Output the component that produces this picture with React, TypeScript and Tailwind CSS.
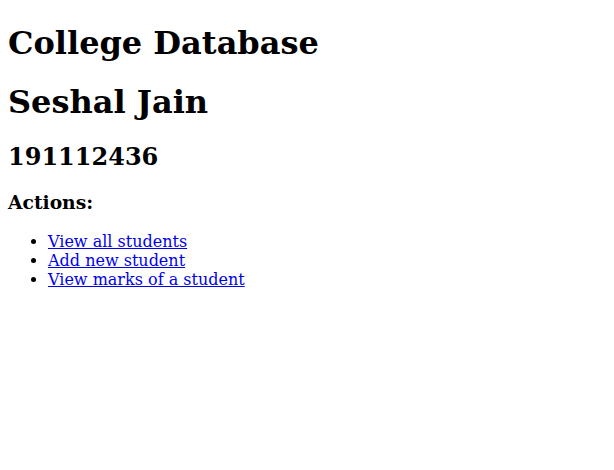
const App = () => {
  const actions = ["View all students", "Add new student", "View marks of a student"];

  return (
    <div className="m-2 font-['DejaVu_Serif',serif] text-base leading-[normal] text-black">
      <h1 className="mt-[23.5px] mb-[21.44px] text-[32px] font-bold">College Database</h1>
      <h1 className="my-[21.44px] text-[32px] font-bold">Seshal Jain</h1>
      <h2 className="my-[19.92px] text-[24px] font-bold">191112436</h2>
      <h3 className="my-[18.72px] text-[18.72px] font-bold">Actions:</h3>
      <ul className="my-4 list-disc pl-10">
        {actions.map((a) => (
          <li key={a}>
            <a href="#" className="text-[#0000ee] underline">
              {a}
            </a>
          </li>
        ))}
      </ul>
    </div>
  );
};

export default App;
